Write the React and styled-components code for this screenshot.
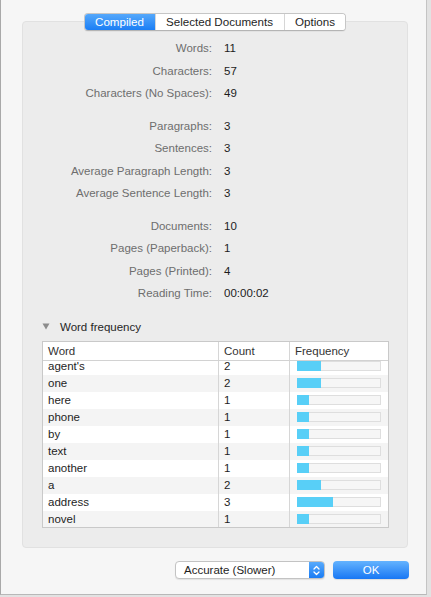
import React from "react";
import styled, { createGlobalStyle } from "styled-components";

const stats = [
  [
    ["Words:", "11"],
    ["Characters:", "57"],
    ["Characters (No Spaces):", "49"],
  ],
  [
    ["Paragraphs:", "3"],
    ["Sentences:", "3"],
    ["Average Paragraph Length:", "3"],
    ["Average Sentence Length:", "3"],
  ],
  [
    ["Documents:", "10"],
    ["Pages (Paperback):", "1"],
    ["Pages (Printed):", "4"],
    ["Reading Time:", "00:00:02"],
  ],
];

const words = [
  ["agent's", 2],
  ["one", 2],
  ["here", 1],
  ["phone", 1],
  ["by", 1],
  ["text", 1],
  ["another", 1],
  ["a", 2],
  ["address", 3],
  ["novel", 1],
];

export default function App() {
  return (
    <>
      <GlobalStyle />
      <Window>
        <Panel>
          <TabBar>
            <Tab active>Compiled</Tab>
            <Tab>Selected Documents</Tab>
            <Tab>Options</Tab>
          </TabBar>

          <Stats>
            {stats.map((group, i) => (
              <StatGroup key={i}>
                {group.map(([label, value]) => (
                  <React.Fragment key={label}>
                    <StatLabel>{label}</StatLabel>
                    <StatValue>{value}</StatValue>
                  </React.Fragment>
                ))}
              </StatGroup>
            ))}
          </Stats>

          <Disclosure>
            <svg width="8" height="7" viewBox="0 0 8 7">
              <path d="M0.5 0.5 L7.5 0.5 L4 6.5 Z" fill="#8c8c8c" />
            </svg>
            <span>Word frequency</span>
          </Disclosure>

          <Table>
            <HeaderRow>
              <HeadCell>Word</HeadCell>
              <HeadCell divider>Count</HeadCell>
              <HeadCell divider>Frequency</HeadCell>
            </HeaderRow>
            <Body>
              <Rows>
                {words.map(([word, count], i) => (
                  <Row key={word} odd={i % 2 === 1}>
                    <Cell>{word}</Cell>
                    <Cell divider>{count}</Cell>
                    <Cell divider>
                      <Track>
                        <Fill style={{ width: count * 12 }} />
                      </Track>
                    </Cell>
                  </Row>
                ))}
              </Rows>
            </Body>
          </Table>
        </Panel>

        <Footer>
          <Popup>
            <PopupText>Accurate (Slower)</PopupText>
            <Stepper>
              <svg width="7" height="11" viewBox="0 0 7 11">
                <path
                  d="M1 4 L3.5 1.5 L6 4 M1 7 L3.5 9.5 L6 7"
                  fill="none"
                  stroke="#fff"
                  strokeWidth="1.3"
                  strokeLinecap="round"
                  strokeLinejoin="round"
                />
              </svg>
            </Stepper>
          </Popup>
          <OkButton>OK</OkButton>
        </Footer>
      </Window>
    </>
  );
}

const GlobalStyle = createGlobalStyle`
  body {
    margin: 0;
    background: #e2e2e2;
    font-family: "Liberation Sans", Arial, sans-serif;
    font-size: 11.5px;
    color: #222;
  }
  * { box-sizing: border-box; }
`;

const Window = styled.div`
  width: 427px;
  height: 595px;
  padding: 21px 18px 0 21px;
  background: #f6f6f6;
  border-left: 1px solid #a9a9a9;
  border-right: 1px solid #c4c4c4;
  border-bottom: 1px solid #b8b8b8;
  display: flex;
  flex-direction: column;
`;

const Panel = styled.div`
  height: 527px;
  background: #ececec;
  border: 1px solid #e1e1e1;
  border-radius: 4px;
  display: flex;
  flex-direction: column;
`;

const TabBar = styled.div`
  display: flex;
  align-self: center;
  margin-top: -9px;
  height: 18px;
  background: #fff;
  border: 1px solid #c6c6c6;
  border-bottom-color: #b4b4b4;
  border-radius: 4px;
  overflow: hidden;
  box-shadow: 0 1px 0 rgba(0, 0, 0, 0.04);
`;

const Tab = styled.div`
  padding: 0 10.5px;
  line-height: 16px;
  font-size: 11.6px;
  color: ${(p) => (p.active ? "#fff" : "#1e1e1e")};
  background: ${(p) => (p.active ? "linear-gradient(#55a8fb, #1b7ef5)" : "#fff")};
  & + & {
    border-left: 1px solid #d6d6d6;
  }
`;

const Stats = styled.div`
  margin-top: 6px;
  display: flex;
  flex-direction: column;
  gap: 10px;
`;

const StatGroup = styled.div`
  display: grid;
  grid-template-columns: 189px auto;
  column-gap: 12px;
  line-height: 22.5px;
`;

const StatLabel = styled.div`
  text-align: right;
  color: #6e6e6e;
`;

const StatValue = styled.div`
  color: #1c1c1c;
`;

const Disclosure = styled.div`
  margin: 14px 0 0 19px;
  height: 16px;
  display: flex;
  align-items: center;
  gap: 10px;
  color: #262626;
`;

const Table = styled.div`
  margin: 6px 18px 0 19px;
  background: #fff;
  border: 1px solid #c9c9c9;
`;

const HeaderRow = styled.div`
  display: grid;
  grid-template-columns: 175px 71px 1fr;
  height: 19px;
  border-bottom: 1px solid #d2d2d2;
`;

const HeadCell = styled.div`
  padding-left: 5px;
  line-height: 18px;
  color: #333;
  border-left: ${(p) => (p.divider ? "1px solid #d6d6d6" : "none")};
`;

const Body = styled.div`
  height: 166px;
  overflow: hidden;
`;

const Rows = styled.div`
  margin-top: -3px;
`;

const Row = styled.div`
  display: grid;
  grid-template-columns: 175px 71px 1fr;
  height: 17px;
  background: ${(p) => (p.odd ? "#f4f4f4" : "#fff")};
`;

const Cell = styled.div`
  padding-left: 5px;
  line-height: 17px;
  color: #1e1e1e;
  display: flex;
  align-items: center;
  border-left: ${(p) => (p.divider ? "1px solid #d6d6d6" : "none")};
`;

const Track = styled.div`
  width: 84px;
  height: 10px;
  margin-left: 2px;
  background: #f6f6f6;
  border: 1px solid #dedede;
  display: flex;
`;

const Fill = styled.div`
  margin: -1px 0 0 -1px;
  height: 10px;
  background: #58cff7;
`;

const Footer = styled.div`
  margin-top: 13px;
  margin-right: -1px;
  display: flex;
  justify-content: flex-end;
  gap: 8px;
`;

const Popup = styled.div`
  width: 150px;
  height: 18px;
  display: flex;
  background: #fff;
  border: 1px solid #c3c3c3;
  border-radius: 4px;
  box-shadow: 0 1px 1px rgba(0, 0, 0, 0.08);
  overflow: hidden;
`;

const PopupText = styled.div`
  flex: 1;
  padding-left: 8px;
  line-height: 16px;
  color: #1e1e1e;
`;

const Stepper = styled.div`
  width: 15px;
  background: linear-gradient(#58aafc, #1a7cf4);
  display: flex;
  align-items: center;
  justify-content: center;
`;

const OkButton = styled.div`
  width: 76px;
  height: 18px;
  line-height: 18px;
  text-align: center;
  color: #fff;
  border-radius: 4px;
  background: linear-gradient(#64b3fe, #1877f4);
  box-shadow: 0 1px 1px rgba(0, 0, 0, 0.1);
`;
